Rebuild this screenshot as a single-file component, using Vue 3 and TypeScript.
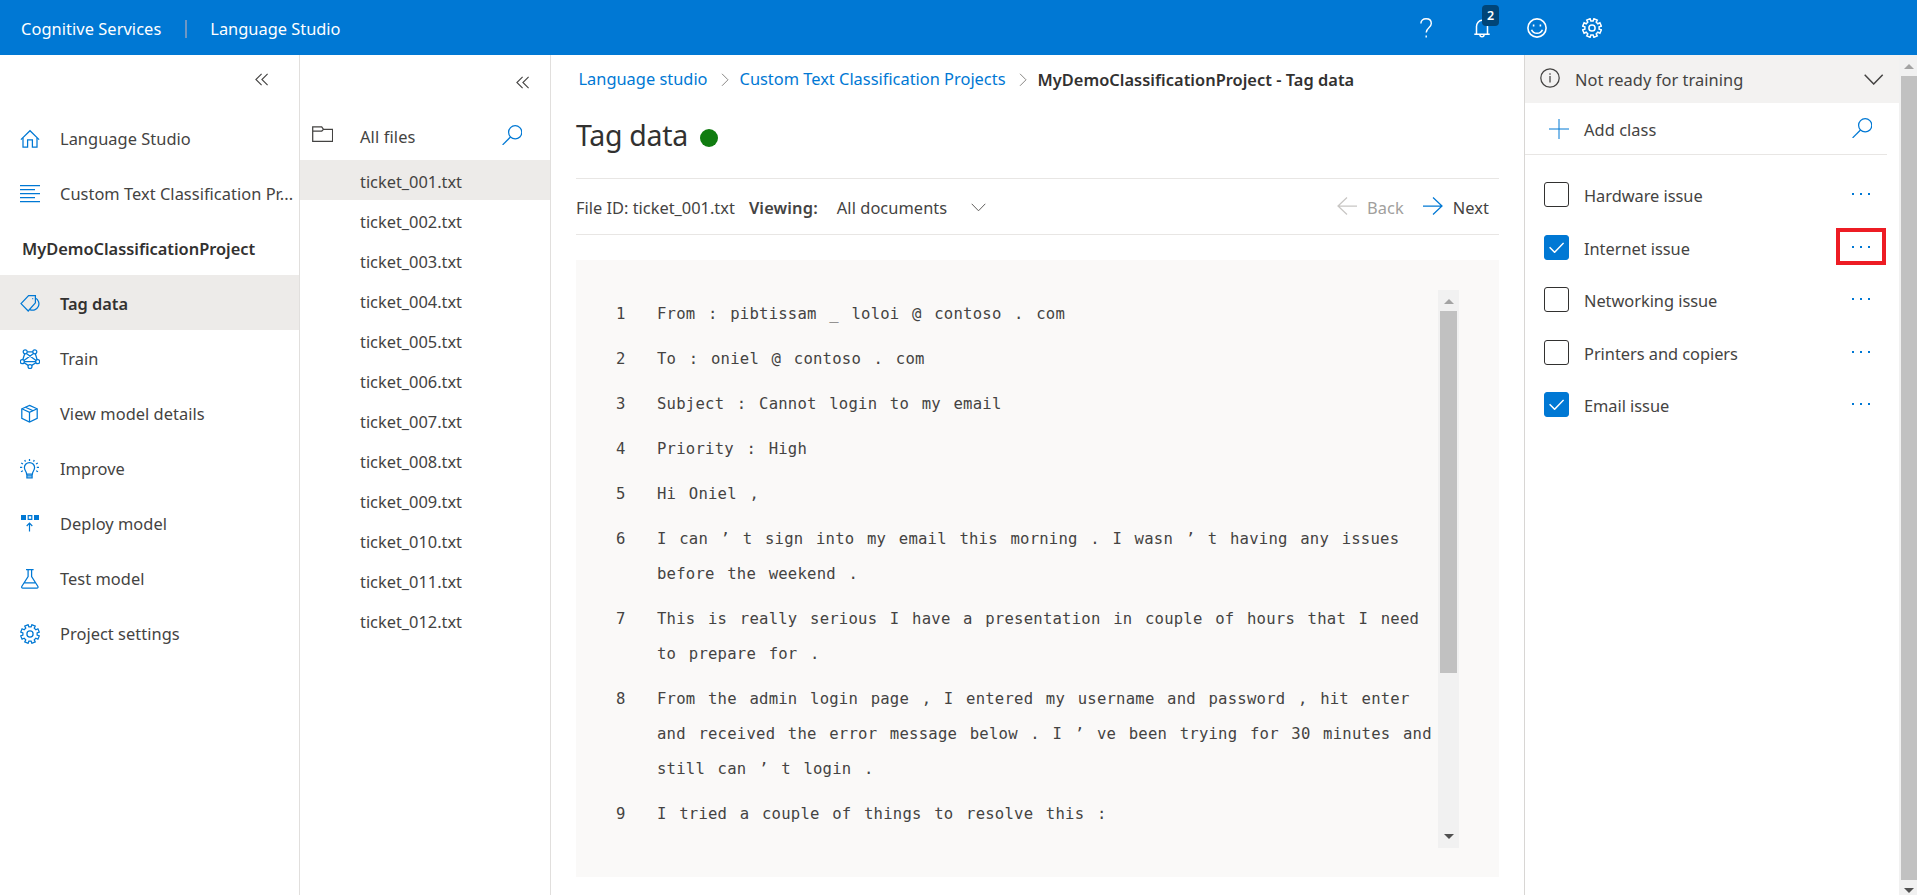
<script setup lang="ts">
import { h, ref, type FunctionalComponent } from 'vue'

const circle = (cx: number, cy: number, r: number): string =>
  `M${cx - r} ${cy}a${r} ${r} 0 1 0 ${2 * r} 0a${r} ${r} 0 1 0 ${-2 * r} 0z`

/** Outline of a cog with eight teeth, centred in a 20 x 20 box. */
function cog(): string {
  const points: string[] = []
  for (let i = 0; i < 8; i++) {
    const mid = 22.5 + i * 45
    const corners: [number, number][] = [[-13.5, 7.2], [-11, 9.5], [11, 9.5], [13.5, 7.2]]
    for (const [offset, radius] of corners) {
      const a = ((mid + offset) * Math.PI) / 180
      points.push(`${(10 + radius * Math.sin(a)).toFixed(2)} ${(10 - radius * Math.cos(a)).toFixed(2)}`)
    }
  }
  return `M${points.join('L')}Z`
}

const glyphs: Record<string, string[]> = {
  home: ['M.9 10.6L10 1.7l9.1 8.9', 'M3 9v9.2h4.6v-7.4h4.8v7.4H17V9'],
  lines: ['M0 1.5h20M0 5.5h15M0 9.5h20M0 13.5h15M0 17.5h20'],
  tag: ['M1 9.6L8.6 1.5H15.4V8.8L8.2 17z', 'M15.2 4a6.2 6.2 0 1 1-5.4 11.6', 'M12.3 4.6h.9'],
  network: [
    circle(5.2, 2.8, 2), circle(14.8, 2.8, 2), circle(2.3, 12.7, 2), circle(17.7, 12.7, 2), circle(10, 17.6, 2),
    'M7.2 2.8h5.6M4.7 4.8L2.8 10.7M15.3 4.8l1.9 5.9M6.4 4.4l9.7 7.1M13.6 4.4L3.9 11.5M4.3 12.7h11.4M4.1 13.8l4.1 2.6M15.9 13.8l-4.1 2.6',
  ],
  cube: ['M9.5 1.4L17.2 4.8v9.6L9.5 18 1.8 14.4V4.8z', 'M1.8 4.8l7.7 3.6 7.7-3.6M9.5 8.4V18', 'M5.4 3.2l7.8 3.6'],
  bulb: [
    'M6.6 15.1c0-2.6-2.2-3.6-2.2-6.5a5.1 5.1 0 0 1 10.2 0c0 2.9-2.2 3.9-2.2 6.5zM6.9 15.1v3.7h5.2v-3.7M6.9 16.9h5.2',
    'M9.5 0v1.9M4.7 1l.8 1.6M14.3 1l-.8 1.6M1.2 4l1.8 1M17.8 4L16 5M0 8.3h2.2M16.8 8.3H19M1 12.7l1.9-.9M18 12.7l-1.9-.9',
  ],
  flask: ['M6 .7h7.6M8.1.7v6.8L1.9 17.2c-.6 1.1-.2 1.9.9 1.9h14.1c1.1 0 1.5-.8.9-1.9L11.6 7.5V.7M4.2 13.8h11.3'],
  cog: [cog(), circle(10, 10, 3.1)],
  collapse: ['M6.6.8L.9 6.5l5.7 5.7M12.6.8L6.9 6.5l5.7 5.7'],
  folder: ['M.7 15.3V.9h9l1.8 2.5h9.1v11.9zM.7 5h9.1l1.7-1.6'],
  search: [circle(13.2, 7.3, 6.6), 'M8.5 12L.6 19.9'],
  right: ['M1 .8l6 6-6 6'],
  down: ['M.7.8l6.8 7 6.8-7'],
  downWide: ['M.7.8l9 9.2 9-9.2'],
  back: ['M20 9H1M10 .5L1 9l9 8.5'],
  next: ['M0 9h19M10 .5L19 9l-9 8.5'],
  info: [circle(10, 10, 9.2), 'M10 8v6.5M10 5.2v1.5'],
  plus: ['M10 0v20M0 10h20'],
  check: ['M.6 5.3l5 5L14.6.9'],
  help: ['M.9 5.6C.9 2.5 3.1.8 6.1.8c3.2 0 5.2 1.8 5.2 4.6 0 4.3-5.1 4.3-5.1 9.2', 'M6.2 17.4v2'],
  bell: ['M.3 15.2h15.4M2.5 15.2V7.6a5.5 6.3 0 0 1 11 0v7.6M5.9 15.5a2.1 2.3 0 0 0 4.2 0'],
  smile: [circle(10, 10, 9.1), 'M4.6 11.7a5.7 5.3 0 0 0 10.8 0M6.6 6.5v2M13.4 6.5v2'],
}

const Icon: FunctionalComponent<{ name: string; w?: number; h?: number; stroke?: number }> = (props) => {
  const w = props.w ?? 20
  const ht = props.h ?? 20
  return h(
    'svg',
    { width: w, height: ht, viewBox: `0 0 ${w} ${ht}`, fill: 'none', stroke: 'currentColor', 'stroke-width': props.stroke ?? 1.25 },
    glyphs[props.name].map((d) => h('path', { d })),
  )
}
Icon.props = ['name', 'w', 'h', 'stroke']

interface NavItem { label: string; icon?: string; active?: boolean; strong?: boolean }

const nav: NavItem[] = [
  { label: 'Language Studio', icon: 'home' },
  { label: 'Custom Text Classification Pr...', icon: 'lines' },
  { label: 'MyDemoClassificationProject', strong: true },
  { label: 'Tag data', icon: 'tag', active: true, strong: true },
  { label: 'Train', icon: 'network' },
  { label: 'View model details', icon: 'cube' },
  { label: 'Improve', icon: 'bulb' },
  { label: 'Deploy model', icon: 'deploy' },
  { label: 'Test model', icon: 'flask' },
  { label: 'Project settings', icon: 'cog' },
]

const files = Array.from({ length: 12 }, (_, i) => `ticket_${String(i + 1).padStart(3, '0')}.txt`)
const current = ref(files[0])

const lines: string[] = [
  'From : pibtissam _ loloi @ contoso . com',
  'To : oniel @ contoso . com',
  'Subject : Cannot login to my email',
  'Priority : High',
  'Hi Oniel ,',
  'I can ’ t sign into my email this morning . I wasn ’ t having any issues before the weekend .',
  'This is really serious I have a presentation in couple of hours that I need to prepare for .',
  'From the admin login page , I entered my username and password , hit enter and received the error message below . I ’ ve been trying for 30 minutes and still can ’ t login .',
  'I tried a couple of things to resolve this :',
]

const classes = ref([
  { label: 'Hardware issue', checked: false, marked: false },
  { label: 'Internet issue', checked: true, marked: true },
  { label: 'Networking issue', checked: false, marked: false },
  { label: 'Printers and copiers', checked: false, marked: false },
  { label: 'Email issue', checked: true, marked: false },
])
</script>

<template>
  <div class="app">
    <header class="topbar">
      <span class="brand">Cognitive Services</span>
      <span class="divider"></span>
      <span class="product">Language Studio</span>
      <div class="actions">
        <Icon class="act-help" name="help" :w="13" :stroke="1.4" />
        <span class="bell">
          <Icon name="bell" :w="16" :h="19" :stroke="1.5" />
          <span class="badge">2</span>
        </span>
        <Icon class="act-smile" name="smile" :stroke="1.6" />
        <Icon class="act-cog" name="cog" :stroke="1.5" />
      </div>
    </header>

    <div class="body">
      <nav class="sidebar">
        <button class="collapse"><Icon name="collapse" :w="14" :h="13" :stroke="1.1" /></button>
        <a v-for="item in nav" :key="item.label" class="nav-item" :class="{ active: item.active, strong: item.strong, heading: !item.icon }">
          <span v-if="item.icon" class="nav-icon">
            <svg v-if="item.icon === 'deploy'" width="20" height="20" viewBox="0 0 20 20" fill="none" stroke="currentColor" stroke-width="1.2">
              <path d="M1 1h5v5H1zM14 1h5v5h-5z" fill="currentColor" stroke="none" />
              <path d="M8.2 1.6h3.6v3.8H8.2zM9.5 17.5V9.5M6.7 12L9.5 9.2l2.8 2.8" />
            </svg>
            <Icon v-else :name="item.icon" />
          </span>
          <span>{{ item.label }}</span>
        </a>
      </nav>

      <section class="files">
        <button class="collapse files-collapse"><Icon name="collapse" :w="14" :h="13" :stroke="1.1" /></button>
        <div class="files-head">
          <Icon class="folder" name="folder" :w="21" :h="16" />
          <span class="files-title">All files</span>
          <Icon class="files-search" name="search" />
        </div>
        <a v-for="file in files" :key="file" class="file" :class="{ active: file === current }" @click="current = file">{{ file }}</a>
      </section>

      <main class="main">
        <div class="crumbs">
          <a>Language studio</a>
          <Icon name="right" :w="8" :h="14" :stroke="1" />
          <a>Custom Text Classification Projects</a>
          <Icon name="right" :w="8" :h="14" :stroke="1" />
          <b>MyDemoClassificationProject - Tag data</b>
        </div>
        <h1 class="title"><span>Tag data</span><i class="status"></i></h1>
        <div class="toolbar">
          <span class="file-id">File ID: {{ current }}</span>
          <b class="viewing">Viewing:</b>
          <span class="filter">All documents</span>
          <Icon class="filter-arrow" name="down" :w="15" :h="9" :stroke="1" />
          <span class="step step-back"><Icon name="back" :h="18" /><span>Back</span></span>
          <span class="step step-next"><Icon name="next" :h="18" /><span>Next</span></span>
        </div>
        <div class="document">
          <ol class="text">
            <li v-for="(line, i) in lines" :key="i">
              <span class="num">{{ i + 1 }}</span>
              <span>{{ line }}</span>
            </li>
          </ol>
          <div class="scroll doc-scroll">
            <span class="arrow up"></span>
            <span class="thumb"></span>
            <span class="arrow dn"></span>
          </div>
        </div>
      </main>

      <aside class="panel">
        <div class="training">
          <Icon class="info" name="info" />
          <span>Not ready for training</span>
          <Icon class="training-arrow" name="downWide" :w="20" :h="11" :stroke="1.5" />
        </div>
        <div class="add">
          <Icon name="plus" :stroke="1" />
          <span>Add class</span>
          <Icon class="add-search" name="search" />
        </div>
        <div class="classes">
          <div v-for="c in classes" :key="c.label" class="class-row" @click="c.checked = !c.checked">
            <span class="box" :class="{ checked: c.checked }">
              <Icon v-if="c.checked" name="check" :w="15" :h="11" :stroke="1.5" />
            </span>
            <span class="class-label">{{ c.label }}</span>
            <span class="more" :class="{ marked: c.marked }"><i></i><i></i><i></i></span>
          </div>
        </div>
      </aside>

      <div class="scroll page-scroll">
        <span class="arrow up"></span>
        <span class="thumb"></span>
        <span class="arrow dn"></span>
      </div>
    </div>
  </div>
</template>

<style>
body {
  overflow: hidden;
}
</style>

<style scoped>
.app {
  display: flex;
  flex-direction: column;
  height: 895px;
  background: #fff;
  color: #444342;
  font: 400 16.4px/22px "Noto Sans", "Open Sans", sans-serif;
}
.app * {
  box-sizing: border-box;
}
svg {
  display: block;
  flex: none;
}
span,
b,
a {
  white-space: nowrap;
}
b {
  font-weight: 600;
}
button {
  padding: 0;
  border: 0;
  background: none;
  color: inherit;
}

.topbar {
  display: flex;
  align-items: center;
  flex: none;
  height: 55px;
  padding: 2px 315px 0 21px;
  background: #0078d4;
  color: #fff;
}
.brand {
  letter-spacing: 0.06px;
}
.divider {
  width: 2px;
  height: 18px;
  margin: 1px 23px 0 24px;
  background: #6f97c4;
}
.actions {
  display: flex;
  align-items: center;
  margin-left: auto;
}
.act-help {
  margin-top: -2px;
}
.bell {
  position: relative;
  margin: -1px 0 0 41px;
}
.badge {
  position: absolute;
  left: 8px;
  top: -14px;
  width: 17px;
  height: 21px;
  border-radius: 4px;
  background: #004578;
  font-size: 12.5px;
  font-weight: 600;
  line-height: 22px;
  text-align: center;
}
.act-smile {
  margin: -2px 0 0 37px;
}
.act-cog {
  margin: -2px 0 0 35px;
}

.body {
  display: flex;
  flex: 1;
  min-height: 0;
}
.sidebar {
  flex: none;
  width: 300px;
  border-right: 1px solid #e1dfdd;
}
.collapse {
  display: flex;
  width: 100%;
  height: 55px;
  padding: 18px 30px 0 0;
  justify-content: flex-end;
}
.nav-item {
  display: flex;
  align-items: center;
  height: 55px;
  padding: 3px 0 0 20px;
  letter-spacing: 0.04px;
}
.nav-icon {
  width: 40px;
  margin-top: -1px;
  color: #0078d4;
}
.heading {
  padding-left: 22px;
}
.strong {
  font-weight: 600;
  color: #323130;
  letter-spacing: -0.02px;
}
.active {
  background: #edebe9;
}

.files {
  flex: none;
  width: 251px;
  border-right: 1px solid #e1dfdd;
}
.files-collapse {
  height: 50px;
  padding: 21px 20px 0 0;
}
.files-head {
  display: flex;
  height: 55px;
  padding: 0 28px 0 12px;
}
.folder {
  margin-top: 21px;
}
.files-title {
  margin: 21px auto 0 27px;
  letter-spacing: 0.13px;
}
.files-search {
  margin-top: 20px;
  color: #0078d4;
}
.file {
  display: block;
  height: 40px;
  padding: 11px 0 0 60px;
  letter-spacing: -0.02px;
}

.main {
  flex: none;
  width: 973px;
  padding: 0 25px;
}
.crumbs {
  display: flex;
  align-items: center;
  height: 49px;
  padding-left: 2.5px;
  color: #8a8886;
}
.crumbs a {
  margin-top: -1px;
  color: #0078d4;
}
.crumbs svg {
  margin: 0 11px 0 13px;
}
.crumbs b {
  color: #323130;
  margin-top: 1px;
  letter-spacing: 0.03px;
}
.title {
  display: flex;
  align-items: center;
  height: 74px;
  margin: 0;
  padding-bottom: 13px;
  color: #323130;
  font-size: 28.5px;
  font-weight: 400;
  line-height: 38px;
  letter-spacing: -0.3px;
}
.status {
  width: 18px;
  height: 18px;
  margin: 7px 0 0 12px;
  border-radius: 50%;
  background: #107c10;
}
.toolbar {
  display: flex;
  align-items: center;
  height: 57px;
  padding-right: 10px;
  padding-top: 3px;
  border: solid #e8e6e4;
  border-width: 1px 0;
}
.viewing {
  margin-left: 14px;
  letter-spacing: 0.15px;
}
.filter {
  margin-left: 19px;
  letter-spacing: 0.06px;
}
.filter-arrow {
  margin: -2px auto 0 24px;
  color: #605e5c;
}
.step {
  display: flex;
  align-items: center;
  letter-spacing: 0.06px;
}
.step svg {
  margin: -4px 10px 0 0;
}
.step-back {
  color: #a19f9d;
}
.step-back svg {
  color: #c8c6c4;
}
.step-next {
  margin-left: 19px;
}
.step-next svg {
  color: #0078d4;
}

.document {
  display: flex;
  justify-content: space-between;
  height: 617px;
  margin-top: 25px;
  padding: 30px 40px 29px 30px;
  background: #faf9f8;
}
.text {
  width: 832px;
  margin: 0;
  padding: 7px 0 0 10px;
  overflow: hidden;
  list-style: none;
  font: 400 15.6px/35px "DejaVu Sans Mono", "Liberation Mono", monospace;
  color: #444342;
  letter-spacing: 0.22px;
  word-spacing: 2.97px;
}
.text li {
  display: flex;
  margin-bottom: 10px;
}
.text span {
  white-space: normal;
}
.text .num {
  flex: none;
  width: 41px;
}

.scroll {
  display: flex;
  flex-direction: column;
  align-items: center;
  flex: none;
  background: #f1f1f1;
}
.arrow {
  border: solid transparent;
  border-width: 0 5px;
}
.up {
  border-bottom: 5px solid #a3a3a3;
}
.dn {
  margin-top: auto;
  border-top: 5px solid #505050;
}
.thumb {
  background: #c1c1c1;
}
.doc-scroll {
  width: 21px;
  padding: 9px 0;
}
.doc-scroll .thumb {
  width: 17px;
  height: 362px;
  margin-top: 7px;
}
.page-scroll {
  width: 18px;
  padding: 9px 0 2px 2px;
}
.page-scroll .thumb {
  width: 16px;
  height: 804px;
  margin-top: 7px;
}

.panel {
  flex: 1;
  border-left: 1px solid #d8d6d4;
}
.training {
  display: flex;
  align-items: center;
  height: 48px;
  padding: 2px 15px 0 15px;
  background: #f3f2f1;
  letter-spacing: 0.06px;
}
.info {
  margin: -4px 15px 0 0;
}
.training-arrow {
  margin: -1px 0 0 auto;
}
.add {
  display: flex;
  align-items: center;
  height: 52px;
  margin-right: 12px;
  padding: 2px 15px 0 24px;
  border-bottom: 1px solid #e8e6e4;
}
.add > svg {
  margin-top: -2px;
  color: #0078d4;
}
.add > span {
  margin: 1px 0 0 15px;
  letter-spacing: 0.06px;
}
.add .add-search {
  margin: -3px 0 0 auto;
}
.classes {
  padding-top: 13.3px;
}
.class-row {
  display: flex;
  align-items: center;
  height: 52.5px;
  padding: 0 13px 0 19px;
}
.box {
  display: flex;
  align-items: center;
  justify-content: center;
  width: 25px;
  height: 25px;
  border: 1px solid #323130;
  border-radius: 3px;
}
.box.checked {
  border-color: #0078d4;
  background: #0078d4;
  color: #fff;
}
.class-label {
  margin: 3px 0 0 15px;
  letter-spacing: -0.04px;
}
.more {
  display: flex;
  align-items: center;
  justify-content: center;
  gap: 6px;
  width: 50px;
  height: 37px;
  margin: -1px 0 0 auto;
}
.more i {
  width: 2px;
  height: 2px;
  background: #0078d4;
}
.marked {
  border: 4px solid #ed1c24;
}
</style>
